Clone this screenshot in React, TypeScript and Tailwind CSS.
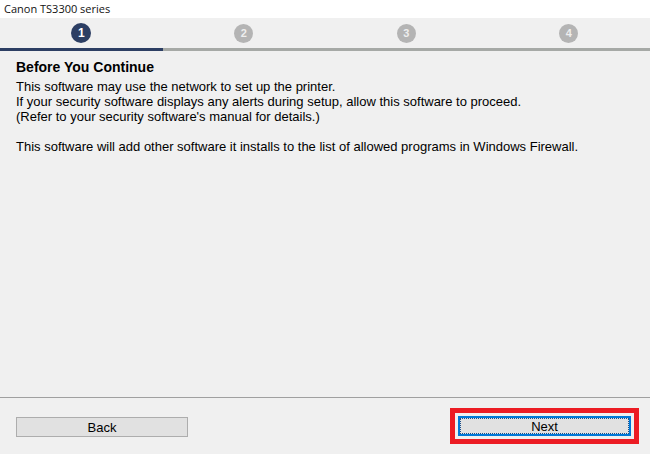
const steps = [1, 2, 3, 4];

export default function App() {
  return (
    <div className="w-[650px] h-[454px] bg-[#f0f0f0] flex flex-col overflow-hidden font-['Liberation_Sans',Arial,sans-serif] text-black">
      <div className="h-[18px] bg-white flex items-center px-[4px] text-[11px] font-['Open_Sans',sans-serif] text-[#111]">
        Canon TS3300 series
      </div>

      <div className="grid grid-cols-4">
        {steps.map((n) => (
          <div key={n} className="flex flex-col">
            <div className="h-[30px] flex items-center justify-center">
              <div
                className={
                  n === 1
                    ? 'w-5 h-5 rounded-full bg-[#2c3e63] text-white text-[12px] font-bold flex items-center justify-center'
                    : 'w-[19px] h-[19px] rounded-full bg-[#b4b4b4] text-[#eeeeee] text-[11px] font-bold flex items-center justify-center'
                }
              >
                {n}
              </div>
            </div>
            <div className={n === 1 ? 'h-[3px] bg-[#2c3e63]' : 'h-[3px] bg-[#a6a9a6]'} />
          </div>
        ))}
      </div>

      <div className="flex-1 px-4 pt-2">
        <h1 className="text-[14px] leading-4 font-bold">Before You Continue</h1>
        <div className="mt-1 text-[13px] leading-[15px]">
          <p>This software may use the network to set up the printer.</p>
          <p>If your security software displays any alerts during setup, allow this software to proceed.</p>
          <p>(Refer to your security software's manual for details.)</p>
          <p className="mt-[15px]">
            This software will add other software it installs to the list of allowed programs in Windows Firewall.
          </p>
        </div>
      </div>

      <div className="border-t border-[#a0a0a0] h-[57px] flex items-start justify-between pl-4 pr-[11px] pt-[10px]">
        <button className="mt-[9px] w-[172px] h-5 bg-[#e1e1e1] border border-[#adadad] text-[13px] leading-none">
          Back
        </button>
        <div className="border-[5px] border-[#ec1c24] p-[3px]">
          <button className="w-[173px] h-5 bg-[#e1e1e1] border-2 border-[#0078d7] text-[13px] leading-none flex items-center justify-center">
            <span className="w-full h-full flex items-center justify-center outline-1 outline-dotted outline-[#1b4f8a] -outline-offset-1">
              Next
            </span>
          </button>
        </div>
      </div>
    </div>
  );
}
